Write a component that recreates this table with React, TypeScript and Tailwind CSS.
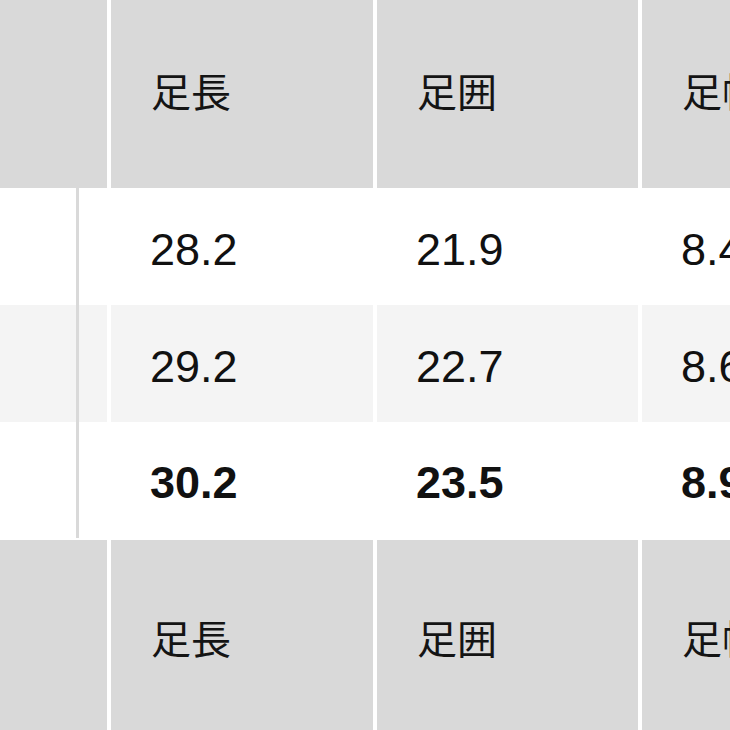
const rows = [
  { values: ["28.2", "21.9", "8.4"], bg: "bg-white", bold: false, h: "h-[117px]" },
  { values: ["29.2", "22.7", "8.6"], bg: "bg-[#f4f4f4]", bold: false, h: "h-[117px]" },
  { values: ["30.2", "23.5", "8.9"], bg: "bg-white", bold: true, h: "h-[116px]" },
];

const labels = ["足長", "足囲", "足幅"];

function HeaderRow({ height }: { height: string }) {
  return (
    <div className={`grid grid-cols-[107px_262px_261px_261px] gap-x-[4px] ${height}`}>
      <div className="bg-[#d9d9d9]" />
      {labels.map((label) => (
        <div
          key={label}
          className="flex items-center bg-[#d9d9d9] pb-[8px] pl-[40px] text-[40px] text-[#141414] [font-family:'Noto_Sans_CJK_JP',sans-serif]"
        >
          {label}
        </div>
      ))}
    </div>
  );
}

export default function App() {
  return (
    <div className="h-[730px] w-[730px] overflow-hidden bg-white">
      <div className="w-[903px]">
        <HeaderRow height="h-[188px]" />

        {rows.map((row) => (
          <div
            key={row.values[0]}
            className={`grid grid-cols-[107px_262px_261px_261px] gap-x-[4px] ${row.h}`}
          >
            <div className={row.bg}>
              <div className="h-full w-[79px] border-r-[3px] border-[#d9d9d9]" />
            </div>
            {row.values.map((v, i) => (
              <div
                key={i}
                className={`flex items-center pt-[6px] pl-[39px] text-[45px] text-[#111] [font-family:'Liberation_Sans',Arial,sans-serif] ${row.bg} ${
                  row.bold ? "font-bold" : "font-normal"
                }`}
              >
                {v}
              </div>
            ))}
          </div>
        ))}

        <div className="mt-[2px]">
          <HeaderRow height="h-[202px]" />
        </div>
      </div>
    </div>
  );
}
